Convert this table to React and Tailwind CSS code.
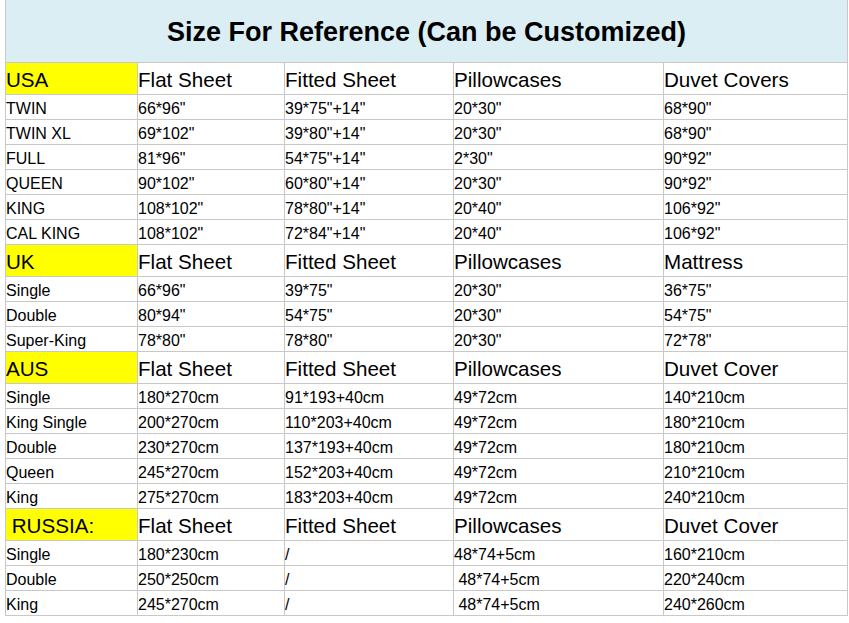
import React from "react";

const sections = [
  {
    head: ["USA", "Flat Sheet", "Fitted Sheet", "Pillowcases", "Duvet Covers"],
    rows: [
      ["TWIN", '66*96"', '39*75"+14"', '20*30"', '68*90"'],
      ["TWIN XL", '69*102"', '39*80"+14"', '20*30"', '68*90"'],
      ["FULL", '81*96"', '54*75"+14"', '2*30"', '90*92"'],
      ["QUEEN", '90*102"', '60*80"+14"', '20*30"', '90*92"'],
      ["KING", '108*102"', '78*80"+14"', '20*40"', '106*92"'],
      ["CAL KING", '108*102"', '72*84"+14"', '20*40"', '106*92"'],
    ],
  },
  {
    head: ["UK", "Flat Sheet", "Fitted Sheet", "Pillowcases", "Mattress"],
    rows: [
      ["Single", '66*96"', '39*75"', '20*30"', '36*75"'],
      ["Double", '80*94"', '54*75"', '20*30"', '54*75"'],
      ["Super-King", '78*80"', '78*80"', '20*30"', '72*78"'],
    ],
  },
  {
    head: ["AUS", "Flat Sheet", "Fitted Sheet", "Pillowcases", "Duvet Cover"],
    rows: [
      ["Single", "180*270cm", "91*193+40cm", "49*72cm", "140*210cm"],
      ["King Single", "200*270cm", "110*203+40cm", "49*72cm", "180*210cm"],
      ["Double", "230*270cm", "137*193+40cm", "49*72cm", "180*210cm"],
      ["Queen", "245*270cm", "152*203+40cm", "49*72cm", "210*210cm"],
      ["King", "275*270cm", "183*203+40cm", "49*72cm", "240*210cm"],
    ],
  },
  {
    head: ["\u00a0RUSSIA:", "Flat Sheet", "Fitted Sheet", "Pillowcases", "Duvet Cover"],
    rows: [
      ["Single", "180*230cm", "/", "48*74+5cm", "160*210cm"],
      ["Double", "250*250cm", "/", "\u00a048*74+5cm", "220*240cm"],
      ["King", "245*270cm", "/", "\u00a048*74+5cm", "240*260cm"],
    ],
  },
];

export default function App() {
  return (
    <div
      className="w-[849px] h-[623px] bg-white text-black"
      style={{ fontFamily: '"Liberation Sans", Arial, sans-serif' }}
    >
      <div className="ml-[5px] w-[843px]">
        <div className="h-[63px] bg-[#daeef3] border-l border-r border-b border-[#c8c8c8] flex items-center justify-center pt-[3px]">
          <span className="text-[27px] font-bold leading-none">
            Size For Reference (Can be Customized)
          </span>
        </div>
        <div className="grid grid-cols-[133px_147px_169px_210px_184px]">
          {sections.map((s, si) => (
            <React.Fragment key={si}>
              {s.head.map((h, i) => (
                <div
                  key={"h" + i}
                  className={
                    "h-[32px] flex items-center pt-[4px] border-r border-b border-[#c8c8c8] text-[20.6px] leading-none whitespace-pre " +
                    (i === 0 ? "bg-[#ffff00] border-l" : "")
                  }
                >
                  {h}
                </div>
              ))}
              {s.rows.map((r, ri) =>
                r.map((c, i) => (
                  <div
                    key={ri + "-" + i}
                    className={
                      "h-[25px] flex items-center pt-[3px] border-r border-b border-[#c8c8c8] text-[16px] leading-none whitespace-pre " +
                      (i === 0 ? "border-l" : "")
                    }
                  >
                    {c}
                  </div>
                ))
              )}
            </React.Fragment>
          ))}
        </div>
      </div>
    </div>
  );
}
